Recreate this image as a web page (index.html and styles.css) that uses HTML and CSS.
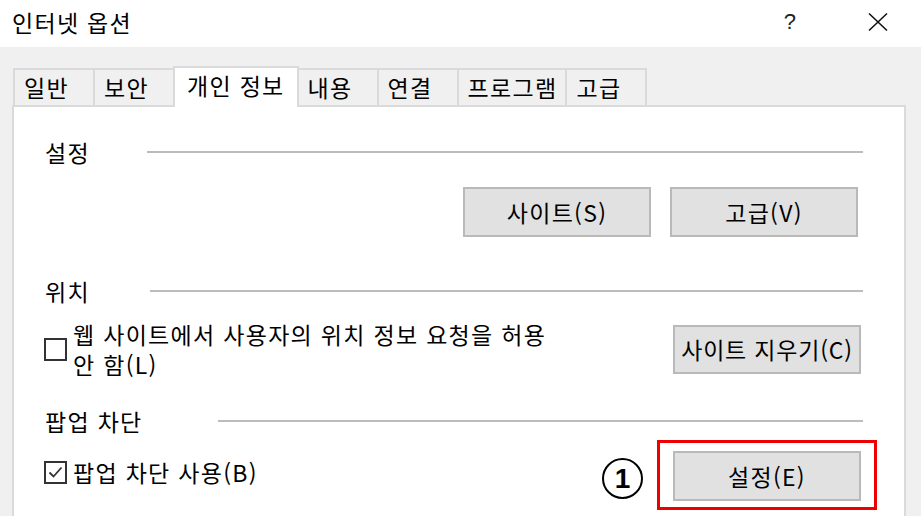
FILE: index.html
```html
<!DOCTYPE html>
<html lang="ko">
<head>
  <meta charset="UTF-8" />
  <meta name="viewport" content="width=device-width, initial-scale=1.0"/>
  <title>인터넷 옵션</title>
  <link rel="stylesheet" href="styles.css">
</head>
<body>
  <div class="window">
    <div class="titlebar">
      <span class="title">인터넷 옵션</span>
      <span class="help">?</span>
      <span class="close">
        <svg width="20" height="18" viewBox="0 0 20 18"><path d="M1 0.5 L19 17.5 M19 0.5 L1 17.5" stroke="#111" stroke-width="1.5" fill="none"/></svg>
      </span>
    </div>

    <div class="content">
      <div class="tabs">
        <div class="tab">일반</div>
        <div class="tab">보안</div>
        <div class="tab active">개인 정보</div>
        <div class="tab">내용</div>
        <div class="tab">연결</div>
        <div class="tab">프로그램</div>
        <div class="tab">고급</div>
      </div>

      <div class="panel">
        <div class="group-title">
          <span class="label label-settings">설정</span>
          <div class="rule"></div>
        </div>
        <div class="button-row">
          <button class="btn">사이트(S)</button>
          <button class="btn">고급(V)</button>
        </div>

        <div class="group-title group-location">
          <span class="label label-location">위치</span>
          <div class="rule"></div>
        </div>
        <div class="option-row">
          <label class="check">
            <span class="box"></span>
            <span class="check-text">웹 사이트에서 사용자의 위치 정보 요청을 허용<br>안 함(L)</span>
          </label>
          <button class="btn">사이트 지우기(C)</button>
        </div>

        <div class="group-title group-popup">
          <span class="label label-popup">팝업 차단</span>
          <div class="rule"></div>
        </div>
        <div class="popup-row">
          <label class="check">
            <span class="box">
              <svg width="19" height="19" viewBox="0 0 19 19"><path d="M3.5 9.5 L7.5 13.5 L15.5 4.5" stroke="#333" stroke-width="1.8" fill="none"/></svg>
            </span>
            <span class="check-text">팝업 차단 사용(B)</span>
          </label>
          <span class="marker">1</span>
          <div class="highlight">
            <button class="btn">설정(E)</button>
          </div>
        </div>
      </div>
    </div>
  </div>
</body>
</html>
```

FILE: styles.css
```css
html, body {
  margin: 0;
  padding: 0;
  width: 921px;
  height: 516px;
  overflow: hidden;
  font-family: "Noto Sans CJK KR", "Noto Sans", sans-serif;
  font-size: 23px;
  letter-spacing: 1.3px;
  color: #000;
  background: #f0f0f0;
}

.window {
  display: flex;
  flex-direction: column;
  height: 100%;
}

.titlebar {
  height: 47px;
  flex-shrink: 0;
  display: flex;
  align-items: center;
  background: #fff;
  padding-left: 12px;
  padding-bottom: 4px;
  box-sizing: border-box;
}

.help {
  margin-left: auto;
  margin-right: 72px;
  font-family: "Liberation Sans", sans-serif;
  font-size: 22px;
  letter-spacing: 0;
  color: #222;
}

.close {
  display: flex;
  margin-right: 33px;
}

.content {
  flex: 1;
  display: flex;
  flex-direction: column;
  padding: 19px 15px 0 12px;
}

.tabs {
  display: flex;
  align-items: flex-end;
  height: 39px;
  padding-left: 1px;
}

.tab {
  height: 37px;
  min-width: 82px;
  box-sizing: border-box;
  padding: 0 8px 0 9px;
  border: 2px solid #dadada;
  border-bottom: none;
  margin-right: -2px;
  background: #f0f0f0;
  line-height: 35px;
  white-space: nowrap;
}

.tab.active {
  position: relative;
  z-index: 1;
  height: 41px;
  margin-bottom: -2px;
  padding: 0 12px 0 12px;
  background: #fff;
  line-height: 34px;
}

.panel {
  flex: 1;
  background: #fff;
  border: 2px solid #dadada;
  border-bottom: none;
  padding: 30px 43px 0 31px;
}

.group-title {
  display: flex;
  align-items: center;
  height: 30px;
}

.group-title .label {
  flex-shrink: 0;
  white-space: nowrap;
}

.label-settings { width: 102px; }
.label-location { width: 105px; }
.label-popup { width: 173px; }

.rule {
  flex: 1;
  height: 2px;
  background: #bcbcbc;
  margin-right: -2px;
}

.group-location { margin-top: 39px; }
.group-popup { margin-top: 27px; }

.button-row {
  display: flex;
  justify-content: flex-end;
  gap: 19px;
  margin-top: 20px;
  margin-right: 3px;
}

.btn {
  width: 188px;
  height: 50px;
  padding: 0;
  background: #e1e1e1;
  border: 2px solid #b9b9b9;
  font-family: inherit;
  font-size: 23px;
  letter-spacing: 1.3px;
  color: #000;
  white-space: nowrap;
}

.option-row {
  display: flex;
  align-items: center;
  justify-content: space-between;
  margin-top: 13px;
}

.option-row .btn {
  height: 49px;
  letter-spacing: 0.8px;
}

.check {
  display: flex;
  align-items: center;
  gap: 6px;
  margin-left: -1px;
}

.check-text {
  line-height: 30px;
}

.box {
  width: 23px;
  height: 23px;
  box-sizing: border-box;
  border: 2px solid #333;
  background: #fff;
  display: flex;
  align-items: center;
  justify-content: center;
  flex-shrink: 0;
}

.popup-row {
  display: flex;
  align-items: center;
  margin-top: 4px;
}

.popup-row .check {
  margin-bottom: 6px;
}

.marker {
  margin-left: auto;
  margin-right: 14px;
  margin-top: 7px;
  width: 41px;
  height: 41px;
  box-sizing: border-box;
  border: 2.5px solid #000;
  border-radius: 50%;
  display: flex;
  align-items: center;
  justify-content: center;
  font-family: "Liberation Sans", sans-serif;
  font-weight: bold;
  font-size: 28px;
  letter-spacing: 0;
}

.highlight {
  border: 3px solid #ee0000;
  padding: 8px 13px 6px;
  margin-right: -16px;
}
```
